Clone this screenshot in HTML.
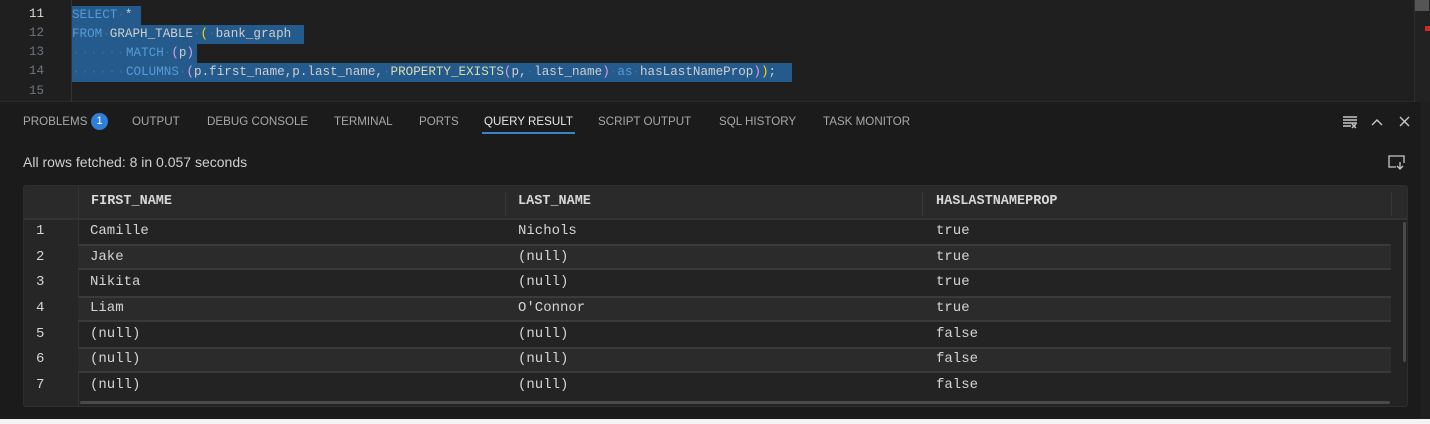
<!DOCTYPE html>
<html><head><style>
*{margin:0;padding:0;box-sizing:border-box}
body{width:1430px;height:424px;background:#1b1b1b;position:relative;overflow:hidden;font-family:"Liberation Sans",sans-serif}
.ed{position:absolute;left:0;top:0;width:1420px;height:102px;background:#1f1f1f;border-bottom:1px solid #2a2a2a}
.ln{position:absolute;left:0;width:44px;text-align:right;font:12.5px "Liberation Mono",monospace;color:#6e7681}
.cl{position:absolute;left:72px;font:12.6px "Liberation Mono",monospace;color:#cfcfcf;white-space:pre;height:19px;line-height:19px}
.sel{background:#245a8c}
.k{color:#569cd6}.f{color:#dcdcaa}.p{color:#d7a0e0}.y{color:#ffd700}.d{color:#4a6d8e}
.ind{display:inline-block;width:54px;letter-spacing:1.5px}
.tab{position:absolute;top:115px;font-size:11.6px;color:#a8a8a8}
.tbl{position:absolute;left:23px;top:185px;width:1385px;height:222px;background:#232323;border:1px solid #2e2e2e;border-radius:3px;overflow:hidden}
.hd{position:absolute;left:0;top:0;width:100%;height:34px;background:#2a2a2a;border-bottom:2px solid #333}
.c{position:absolute;font:14px "Liberation Mono",monospace;color:#d4d4d4}
.h{font-weight:bold;font-size:13.5px;color:#d8d8d8}
.row{position:absolute;left:54px;width:1313px;height:26px}
.ev{background:#2b2b2b;border-top:2px solid #3a3a3a;border-bottom:2px solid #3a3a3a}
.num{position:absolute;left:0;top:34px;width:54px;height:188px;background:#262626}
</style></head><body>
<div class="ed">
<div style="position:absolute;left:71px;top:0;width:1px;height:102px;background:#333"></div>
<div class="ln" style="top:7px;color:#ddd">11</div>
<div class="ln" style="top:26px">12</div>
<div class="ln" style="top:45px">13</div>
<div class="ln" style="top:64px">14</div>
<div class="ln" style="top:84px">15</div>
<div class="cl sel" style="top:6px;width:69px"><span class="k">SELECT</span><span class="d">·</span>*</div>
<div class="cl sel" style="top:25px;width:232px"><span class="k">FROM</span><span class="d">·</span>GRAPH_TABLE<span class="d">·</span><span class="y">(</span><span class="d">·</span>bank_graph</div>
<div class="cl sel" style="top:44px;width:125px"><span class="d ind">······</span><span class="k">MATCH</span><span class="d">·</span><span class="p">(</span>p<span class="p">)</span></div>
<div class="cl sel" style="top:63px;width:720px"><span class="d ind">······</span><span class="k">COLUMNS</span><span class="d">·</span><span class="p">(</span>p.first_name,p.last_name,<span class="d">·</span><span class="f">PROPERTY_EXISTS</span><span class="p">(</span>p,<span class="d">·</span>last_name<span class="p">)</span><span class="d">·</span><span class="k">as</span><span class="d">·</span>hasLastNameProp<span class="p">)</span><span class="y">)</span>;</div>
</div>
<div style="position:absolute;left:1414px;top:0;width:16px;height:102px;background:#222;border-left:1px solid #2e2e2e"></div>
<div style="position:absolute;left:1415px;top:0;width:14px;height:11px;background:#555"></div>
<div style="position:absolute;left:1425px;top:26px;width:5px;height:5px;background:#d22"></div>
<div style="position:absolute;left:1420px;top:102px;width:10px;height:317px;background:#1f1f1f"></div>

<div class="tab" style="left:23px">PROBLEMS</div>
<div style="position:absolute;left:91px;top:113px;width:17px;height:17px;border-radius:50%;background:#2f7fd8;color:#fff;font-size:11px;text-align:center;line-height:17px">1</div>
<div class="tab" style="left:132px">OUTPUT</div>
<div class="tab" style="left:207px">DEBUG CONSOLE</div>
<div class="tab" style="left:334px">TERMINAL</div>
<div class="tab" style="left:419px">PORTS</div>
<div class="tab" style="left:484px;color:#e6e6e6">QUERY RESULT</div>
<div style="position:absolute;left:482px;top:132px;width:93px;height:2px;background:#3a83c8"></div>
<div class="tab" style="left:598px">SCRIPT OUTPUT</div>
<div class="tab" style="left:719px">SQL HISTORY</div>
<div class="tab" style="left:823px">TASK MONITOR</div>
<svg style="position:absolute;left:1340px;top:112px" width="80" height="20" stroke="#c8c8c8" stroke-width="1.4" fill="none">
<path d="M3 5h14M3 8h14M3 11h14M3 14h8M12 12l4 4M16 12l-4 4"/>
<path d="M32 13l5-5 5 5"/>
<path d="M60 5l9 9M69 5l-9 9"/>
</svg>
<div style="position:absolute;left:23px;top:154px;font-size:14px;color:#d0d0d0">All rows fetched: 8 in 0.057 seconds</div>
<svg style="position:absolute;left:1387px;top:154px" width="20" height="18" stroke="#c8c8c8" stroke-width="1.3" fill="none">
<path d="M9 13H2V2h15v7"/><path d="M13 8v7M10 12l3 3 3-3"/></svg>

<div class="tbl">
<div class="hd"></div>
<div class="num"></div>
<div style="position:absolute;left:54px;top:0;width:1px;height:222px;background:#333"></div>
<div style="position:absolute;left:481px;top:6px;width:1px;height:24px;background:#3a3a3a"></div>
<div style="position:absolute;left:898px;top:6px;width:1px;height:24px;background:#3a3a3a"></div>
<div style="position:absolute;left:1367px;top:6px;width:1px;height:24px;background:#3a3a3a"></div>
<div class="c h" style="left:67px;top:8px">FIRST_NAME</div>
<div class="c h" style="left:494px;top:8px">LAST_NAME</div>
<div class="c h" style="left:912px;top:8px">HASLASTNAMEPROP</div>
<div class="row ev" style="top:58px"></div>
<div class="row ev" style="top:110px"></div>
<div class="row ev" style="top:161px"></div>
<div style="position:absolute;left:1379px;top:36px;width:3px;height:140px;background:#4a4a4a;border-radius:2px"></div>
<div style="position:absolute;left:56px;top:215px;width:1310px;height:3px;background:#4a4a4a;border-radius:2px"></div>

<div class="c" style="left:12px;top:37px">1</div><div class="c" style="left:66px;top:37px">Camille</div><div class="c" style="left:494px;top:37px">Nichols</div><div class="c" style="left:912px;top:37px">true</div>
<div class="c" style="left:12px;top:63px">2</div><div class="c" style="left:66px;top:63px">Jake</div><div class="c" style="left:494px;top:63px">(null)</div><div class="c" style="left:912px;top:63px">true</div>
<div class="c" style="left:12px;top:88px">3</div><div class="c" style="left:66px;top:88px">Nikita</div><div class="c" style="left:494px;top:88px">(null)</div><div class="c" style="left:912px;top:88px">true</div>
<div class="c" style="left:12px;top:114px">4</div><div class="c" style="left:66px;top:114px">Liam</div><div class="c" style="left:494px;top:114px">O'Connor</div><div class="c" style="left:912px;top:114px">true</div>
<div class="c" style="left:12px;top:140px">5</div><div class="c" style="left:66px;top:140px">(null)</div><div class="c" style="left:494px;top:140px">(null)</div><div class="c" style="left:912px;top:140px">false</div>
<div class="c" style="left:12px;top:165px">6</div><div class="c" style="left:66px;top:165px">(null)</div><div class="c" style="left:494px;top:165px">(null)</div><div class="c" style="left:912px;top:165px">false</div>
<div class="c" style="left:12px;top:191px">7</div><div class="c" style="left:66px;top:191px">(null)</div><div class="c" style="left:494px;top:191px">(null)</div><div class="c" style="left:912px;top:191px">false</div>
</div>
<div style="position:absolute;left:0;top:419px;width:1430px;height:5px;background:#f4f4f4"></div>
</body></html>
